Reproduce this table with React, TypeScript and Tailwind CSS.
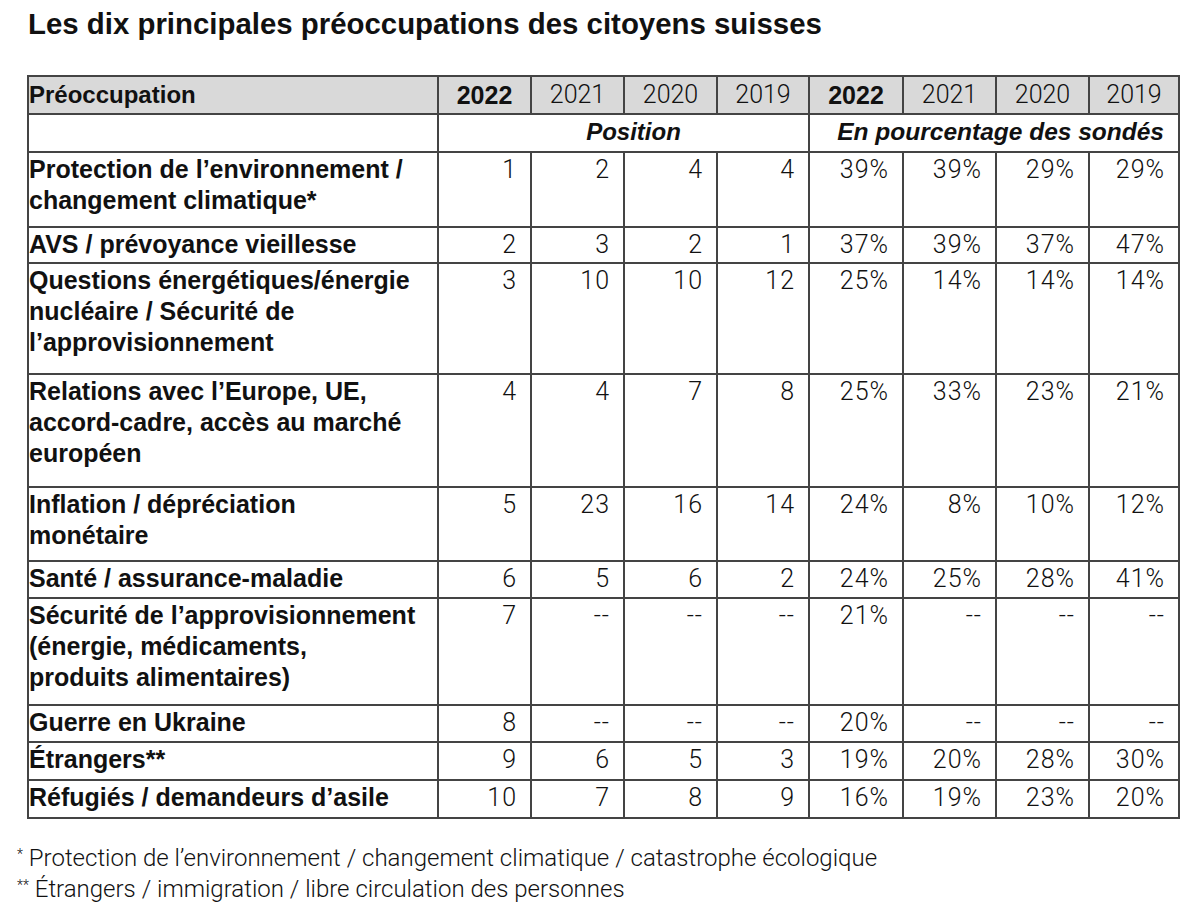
const rows = [
  { label: ["Protection de l’environnement /", "changement climatique*"], h: "h-[75px]", pos: ["1", "2", "4", "4"], pct: ["39%", "39%", "29%", "29%"] },
  { label: ["AVS / prévoyance vieillesse"], h: "h-[36px]", pos: ["2", "3", "2", "1"], pct: ["37%", "39%", "37%", "47%"] },
  { label: ["Questions énergétiques/énergie", "nucléaire / Sécurité de", "l’approvisionnement"], h: "h-[111px]", pos: ["3", "10", "10", "12"], pct: ["25%", "14%", "14%", "14%"] },
  { label: ["Relations avec l’Europe, UE,", "accord-cadre, accès au marché", "européen"], h: "h-[113px]", pos: ["4", "4", "7", "8"], pct: ["25%", "33%", "23%", "21%"] },
  { label: ["Inflation / dépréciation", "monétaire"], h: "h-[74px]", pos: ["5", "23", "16", "14"], pct: ["24%", "8%", "10%", "12%"] },
  { label: ["Santé / assurance-maladie"], h: "h-[37px]", pos: ["6", "5", "6", "2"], pct: ["24%", "25%", "28%", "41%"] },
  { label: ["Sécurité de l’approvisionnement", "(énergie, médicaments,", "produits alimentaires)"], h: "h-[107px]", pos: ["7", "--", "--", "--"], pct: ["21%", "--", "--", "--"] },
  { label: ["Guerre en Ukraine"], h: "h-[37px]", pos: ["8", "--", "--", "--"], pct: ["20%", "--", "--", "--"] },
  { label: ["Étrangers**"], h: "h-[38px]", pos: ["9", "6", "5", "3"], pct: ["19%", "20%", "28%", "30%"] },
  { label: ["Réfugiés / demandeurs d’asile"], h: "h-[38px]", pos: ["10", "7", "8", "9"], pct: ["16%", "19%", "23%", "20%"] },
];

const years = ["2022", "2021", "2020", "2019"];

const bold = "font-['Liberation_Sans',Arial,sans-serif] font-bold";
const light = "font-['Roboto',sans-serif] font-light";
const cell = "border-2 border-[#444] align-top";

export default function App() {
  return (
    <div className="min-h-[921px] w-[1200px] bg-white text-[#111]">
      <div className="pl-[27px] pt-[7px]">
        <h1 className={`${bold} text-[29.4px] leading-[34px] pl-[1px]`}>
          Les dix principales préoccupations des citoyens suisses
        </h1>

        <table className="mt-[34px] w-[1151px] table-fixed border-collapse">
          <colgroup>
            <col className="w-[410px]" />
            <col className="w-[93px]" />
            <col className="w-[93px]" />
            <col className="w-[93px]" />
            <col className="w-[92px]" />
            <col className="w-[94px]" />
            <col className="w-[93px]" />
            <col className="w-[93px]" />
            <col className="w-[90px]" />
          </colgroup>
          <thead>
            <tr className="h-[38px] bg-[#d9d9d9]">
              <th className={`${cell} ${bold} text-left align-middle pl-0 pt-[3px] text-[24px] leading-[30px]`}>
                Préoccupation
              </th>
              {[...years, ...years].map((y, i) => (
                <th
                  key={i}
                  className={`${cell} align-middle text-center pt-[3px] text-[25px] leading-[30px] ${
                    i % 4 === 0 ? bold + " text-[24px]" : light
                  }`}
                >
                  {y}
                </th>
              ))}
            </tr>
            <tr className="h-[38px]">
              <th className={cell}></th>
              <th colSpan={4} className={`${cell} ${bold} italic align-middle text-center pl-[20px] pt-[2px] text-[24px] leading-[30px]`}>
                Position
              </th>
              <th colSpan={4} className={`${cell} ${bold} italic align-middle text-right pr-[14px] pt-[2px] text-[24.5px] leading-[30px]`}>
                En pourcentage des sondés
              </th>
            </tr>
          </thead>
          <tbody>
            {rows.map((r, i) => (
              <tr key={i} className={r.h}>
                <td className={`${cell} ${bold} pl-0 pt-[1px] text-[25px] leading-[31px]`}>
                  {r.label.map((l, j) => (
                    <div key={j} className="whitespace-nowrap">
                      {l}
                    </div>
                  ))}
                </td>
                {[...r.pos, ...r.pct].map((v, j) => (
                  <td
                    key={j}
                    className={`${cell} ${light} text-right pr-[13px] pt-[1px] text-[25px] leading-[31px] tracking-[1px]`}
                  >
                    {v}
                  </td>
                ))}
              </tr>
            ))}
          </tbody>
        </table>

        <div className={`${light} mt-[24px] -ml-[10px] text-[24px] leading-[31px]`}>
          <p>
            <sup className="text-[14px]">*</sup> Protection de l’environnement / changement climatique / catastrophe écologique
          </p>
          <p>
            <sup className="text-[14px]">**</sup> Étrangers / immigration / libre circulation des personnes
          </p>
        </div>
      </div>
    </div>
  );
}
